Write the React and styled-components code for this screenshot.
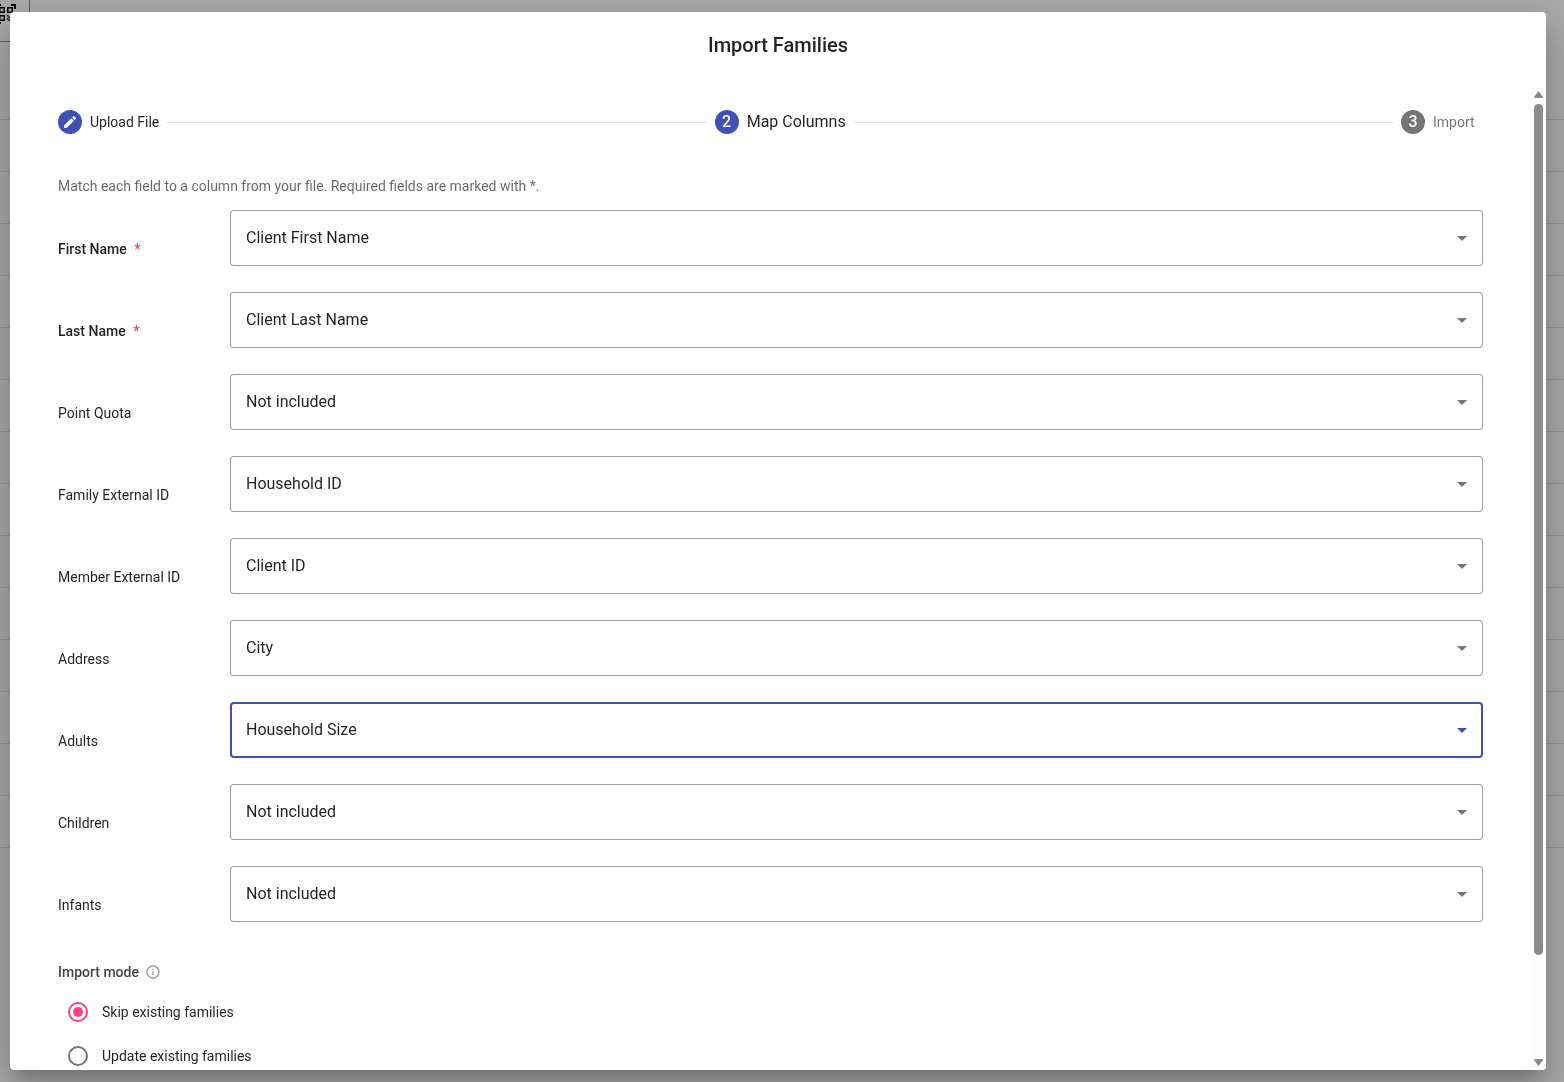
import React, { useEffect, useRef, useState } from 'react';
import styled, { createGlobalStyle } from 'styled-components';
import { MdArrowDropDown, MdCreate, MdInfoOutline, MdQrCodeScanner } from 'react-icons/md';

const GlobalStyle = createGlobalStyle`
    * {
        box-sizing: border-box;
    }
    body {
        margin: 0;
        overflow: hidden;
        background-color: #fafafa;
        font-family: Roboto, "Liberation Sans", sans-serif;
        font-size: 14px;
        line-height: 20px;
        color: rgba(0, 0, 0, 0.87);
    }
`
const Page = styled.div`
    height: 100vh;
    overflow: hidden;
`
const PageToolbar = styled.div`
    width: 30px;
    height: 42px;
    padding-top: 2px;
    border-right: 1px solid #8a8a8a;
    border-bottom: 1px solid #8a8a8a;
`
const ScanIcon = styled(MdQrCodeScanner)`
    display: block;
    width: 24px;
    height: 24px;
    margin-left: -6px;
    color: #000;
`
const PageRow = styled.div`
    height: ${(props) => (props.$header ? 78 : 52)}px;
    border-bottom: 1px solid #dcdcdc;
`
const Backdrop = styled.div`
    position: fixed;
    inset: 0;
    display: flex;
    padding: 12px 18px 12px 10px;
    background-color: rgba(0, 0, 0, 0.32);
`
const Dialog = styled.div`
    flex: 1;
    min-width: 0;
    display: flex;
    flex-direction: column;
    overflow: hidden;
    border-radius: 4px;
    background-color: #fff;
    box-shadow: 0 11px 15px -7px rgba(0, 0, 0, 0.2),
        0 24px 38px 3px rgba(0, 0, 0, 0.14),
        0 9px 46px 8px rgba(0, 0, 0, 0.12);
`
const Title = styled.h2`
    margin: 0;
    padding: 17px 24px 27px;
    text-align: center;
    font-size: 20px;
    line-height: 32px;
    font-weight: 500;
`
const DialogBody = styled.div`
    flex: 1;
    min-height: 0;
    display: flex;
`
const Content = styled.div`
    flex: 1;
    min-width: 0;
    overflow-y: auto;
    scrollbar-width: none;
    padding: 22px 48px 110px;
`
const ScrollRail = styled.div`
    width: 15px;
    display: flex;
    flex-direction: column;
    align-items: center;
    justify-content: space-between;
    padding: 3px 0 4px;
    background-color: #fdfdfd;
`
const RailArrow = styled.svg`
    display: block;
    width: 9px;
    height: 7px;
    fill: #8b8b8b;
`
const RailTrack = styled.div`
    flex: 1;
    width: 9px;
    margin: 6px 0 4px;
`
const RailThumb = styled.div`
    border-radius: 5px;
    background-color: #8b8b8b;
`
const Stepper = styled.ol`
    display: flex;
    align-items: center;
    gap: 8px;
    margin: 0 0 42px;
    padding: 0;
    list-style: none;
`
const Step = styled.li`
    display: flex;
    align-items: center;
    gap: 8px;
`
const StepBadge = styled.span`
    display: flex;
    align-items: center;
    justify-content: center;
    width: 24px;
    height: 24px;
    border-radius: 50%;
    background-color: ${(props) => (props.$reached ? '#3f51b5' : '#757575')};
    color: #fff;
    font-size: 16px;
    font-weight: 500;
`
const StepLabel = styled.span`
    min-width: 50px;
    font-size: ${(props) => (props.$current ? 16 : 14)}px;
    line-height: 24px;
    color: ${(props) => (props.$reached ? 'rgba(0, 0, 0, 0.87)' : 'rgba(0, 0, 0, 0.54)')};
`
const StepLine = styled.li`
    flex: 1;
    border-top: 1px solid #e0e0e0;
`
const Hint = styled.p`
    margin: 0 0 14px;
    color: rgba(0, 0, 0, 0.6);
`
const FieldList = styled.div`
    display: flex;
    flex-direction: column;
    gap: 4px;
`
const FieldRow = styled.div`
    display: flex;
    align-items: center;
    gap: 12px;
`
const FieldLabel = styled.label`
    width: 160px;
    font-weight: ${(props) => (props.$required ? 500 : 400)};
`
const Required = styled.span`
    margin-left: 4px;
    color: #f44336;
`
const SelectBox = styled.div`
    flex: 1;
    display: grid;
    align-items: center;
    padding-bottom: 22px;
`
const Select = styled.select`
    grid-area: 1 / 1;
    appearance: none;
    width: 100%;
    height: 56px;
    padding: 0 48px 2px 16px;
    border: none;
    border-radius: 4px;
    outline: none;
    background-color: transparent;
    box-shadow: inset 0 0 0 ${(props) => (props.$active ? '2px #3f51b5' : '1px #9e9e9e')};
    font-family: inherit;
    font-size: 16px;
    color: inherit;
`
const SelectArrow = styled(MdArrowDropDown)`
    grid-area: 1 / 1;
    justify-self: end;
    width: 24px;
    height: 24px;
    margin-right: 9px;
    pointer-events: none;
    color: ${(props) => (props.$active ? '#3f51b5' : '#757575')};
`
const ModeGroup = styled.fieldset`
    display: flex;
    flex-direction: column;
    gap: 4px;
    margin: 18px 0 0;
    padding: 0;
    border: none;
`
const ModeLegend = styled.legend`
    display: flex;
    align-items: center;
    gap: 6px;
    padding: 0 0 10px;
    font-weight: 500;
    color: rgba(0, 0, 0, 0.75);
`
const InfoIcon = styled(MdInfoOutline)`
    width: 16px;
    height: 16px;
    color: #9a9a9a;
`
const ModeOption = styled.label`
    display: flex;
    align-items: center;
    gap: 14px;
    height: 40px;
    padding-left: 10px;
`
const Radio = styled.input`
    appearance: none;
    display: grid;
    place-items: center;
    width: 20px;
    height: 20px;
    margin: 0;
    border: 2px solid #757575;
    border-radius: 50%;

    &:checked {
        border-color: #ff4081;
    }
    &:checked::before {
        content: "";
        width: 10px;
        height: 10px;
        border-radius: 50%;
        background-color: #ff4081;
    }
`

const columns = ['Not included', 'Client First Name', 'Client Last Name', 'Household ID', 'Client ID', 'City', 'Household Size'];

const fields = [
    { id: 'firstName', label: 'First Name', required: true, column: 'Client First Name' },
    { id: 'lastName', label: 'Last Name', required: true, column: 'Client Last Name' },
    { id: 'pointQuota', label: 'Point Quota', column: 'Not included' },
    { id: 'familyId', label: 'Family External ID', column: 'Household ID' },
    { id: 'memberId', label: 'Member External ID', column: 'Client ID' },
    { id: 'address', label: 'Address', column: 'City' },
    { id: 'adults', label: 'Adults', column: 'Household Size' },
    { id: 'children', label: 'Children', column: 'Not included' },
    { id: 'infants', label: 'Infants', column: 'Not included' },
];

const modes = [
    { id: 'skip', label: 'Skip existing families' },
    { id: 'update', label: 'Update existing families' },
];

const MappingField = ({ field, active, onActivate }) => (
    <FieldRow>
        <FieldLabel htmlFor={field.id} $required={field.required}>
            {field.label} {field.required && <Required>*</Required>}
        </FieldLabel>
        <SelectBox>
            <Select id={field.id} defaultValue={field.column} $active={active} onFocus={() => onActivate(field.id)}>
                {columns.map((c) => (
                    <option key={c}>{c}</option>
                ))}
            </Select>
            <SelectArrow $active={active} />
        </SelectBox>
    </FieldRow>
)

const App = () => {
    const contentRef = useRef(null);
    const [thumb, setThumb] = useState({ size: 100, top: 0 });
    const [active, setActive] = useState('adults');
    const [mode, setMode] = useState('skip');

    const updateThumb = () => {
        const el = contentRef.current;
        setThumb({
            size: (el.clientHeight / el.scrollHeight) * 100,
            top: (el.scrollTop / el.clientHeight) * 100,
        });
    };

    useEffect(() => {
        updateThumb();
        window.addEventListener('resize', updateThumb);
        return () => window.removeEventListener('resize', updateThumb);
    }, []);

    return (
        <>
            <GlobalStyle />
            <Page aria-hidden="true">
                <PageToolbar>
                    <ScanIcon />
                </PageToolbar>
                <PageRow $header />
                {Array.from({ length: 14 }, (_, i) => (
                    <PageRow key={i} />
                ))}
            </Page>
            <Backdrop>
                <Dialog role="dialog" aria-labelledby="dialog-title">
                    <Title id="dialog-title">Import Families</Title>
                    <DialogBody>
                        <Content ref={contentRef} onScroll={updateThumb}>
                            <Stepper>
                                <Step>
                                    <StepBadge $reached><MdCreate /></StepBadge>
                                    <StepLabel $reached>Upload File</StepLabel>
                                </Step>
                                <StepLine aria-hidden="true" />
                                <Step aria-current="step">
                                    <StepBadge $reached>2</StepBadge>
                                    <StepLabel $reached $current>Map Columns</StepLabel>
                                </Step>
                                <StepLine aria-hidden="true" />
                                <Step>
                                    <StepBadge>3</StepBadge>
                                    <StepLabel>Import</StepLabel>
                                </Step>
                            </Stepper>
                            <Hint>Match each field to a column from your file. Required fields are marked with *.</Hint>
                            <FieldList>
                                {fields.map((f) => (
                                    <MappingField key={f.id} field={f} active={f.id === active} onActivate={setActive} />
                                ))}
                            </FieldList>
                            <ModeGroup>
                                <ModeLegend>Import mode <InfoIcon /></ModeLegend>
                                {modes.map((m) => (
                                    <ModeOption key={m.id}>
                                        <Radio type="radio" name="mode" checked={mode === m.id} onChange={() => setMode(m.id)} />
                                        {m.label}
                                    </ModeOption>
                                ))}
                            </ModeGroup>
                        </Content>
                        <ScrollRail aria-hidden="true">
                            <RailArrow viewBox="0 0 9 7"><path d="M4.5 0 L9 6 Q9 7 8 7 L1 7 Q0 7 0 6 Z" /></RailArrow>
                            <RailTrack>
                                <RailThumb style={{ height: `${thumb.size}%`, transform: `translateY(${thumb.top}%)` }} />
                            </RailTrack>
                            <RailArrow viewBox="0 0 9 7"><path d="M4.5 7 L9 1 Q9 0 8 0 L1 0 Q0 0 0 1 Z" /></RailArrow>
                        </ScrollRail>
                    </DialogBody>
                </Dialog>
            </Backdrop>
        </>
    )
}

export default App
